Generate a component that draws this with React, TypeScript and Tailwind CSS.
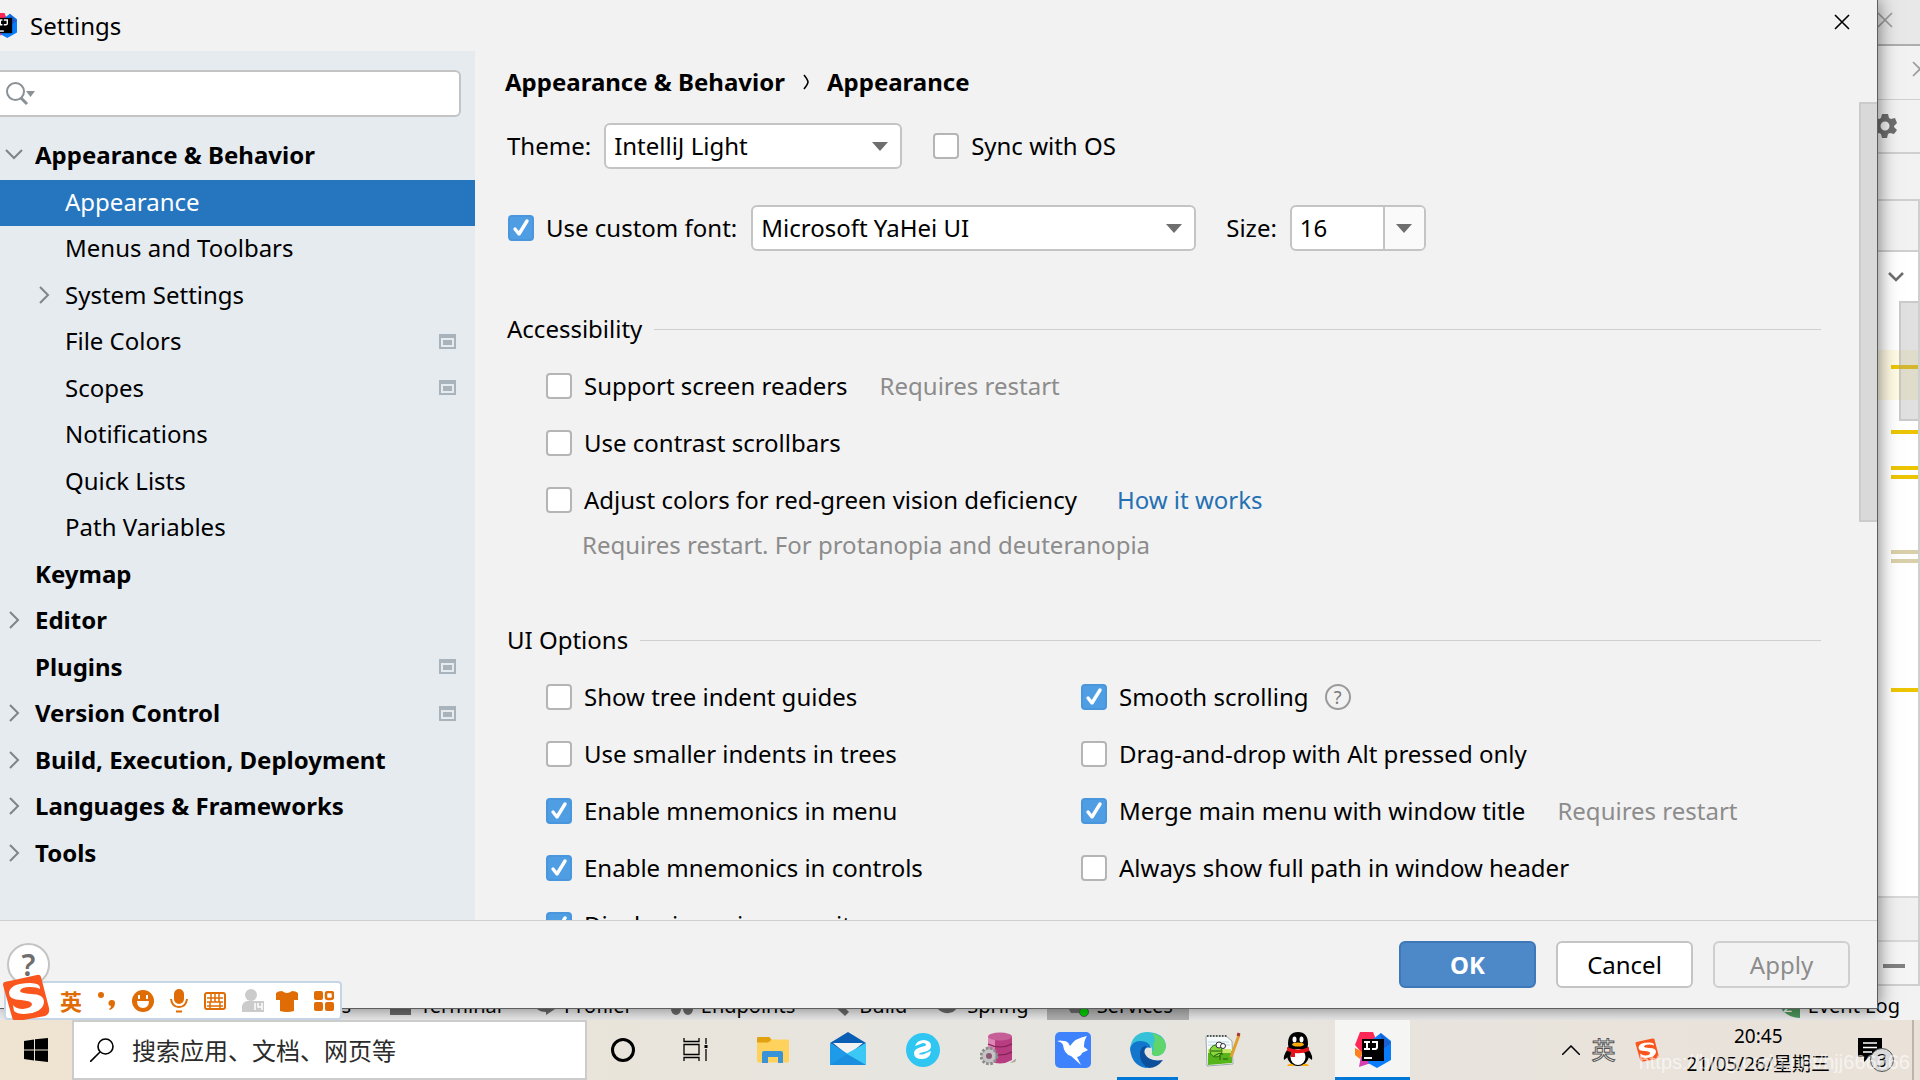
import React from 'react';

type TreeItem = {
  label: string;
  level: 0 | 1;
  arrow?: 'down' | 'right';
  project?: boolean;
  selected?: boolean;
};

const treeItems: TreeItem[] = [
  { label: 'Appearance & Behavior', level: 0, arrow: 'down' },
  { label: 'Appearance', level: 1, selected: true },
  { label: 'Menus and Toolbars', level: 1 },
  { label: 'System Settings', level: 1, arrow: 'right' },
  { label: 'File Colors', level: 1, project: true },
  { label: 'Scopes', level: 1, project: true },
  { label: 'Notifications', level: 1 },
  { label: 'Quick Lists', level: 1 },
  { label: 'Path Variables', level: 1 },
  { label: 'Keymap', level: 0 },
  { label: 'Editor', level: 0, arrow: 'right' },
  { label: 'Plugins', level: 0, project: true },
  { label: 'Version Control', level: 0, arrow: 'right', project: true },
  { label: 'Build, Execution, Deployment', level: 0, arrow: 'right' },
  { label: 'Languages & Frameworks', level: 0, arrow: 'right' },
  { label: 'Tools', level: 0, arrow: 'right' },
];

const IdeaLogo: React.FC<{ className?: string }> = ({ className }) => (
  <svg viewBox="0 0 36 36" className={className} aria-hidden="true">
    <path d="M5 0h13l4 10L8 22 0 13z" fill="#fe2857" />
    <path d="M0 16l8 4-3 7-5-4z" fill="#fc801d" />
    <path d="M6 24l8 4 2 3-12 4z" fill="#d73fb0" />
    <path d="M18 7l8-6 10 8v19l-14 8-9-5z" fill="#087cfa" />
    <path d="M25 1l11 10-8 6z" fill="#1b5fd0" />
    <rect x="7" y="7" width="22" height="22" fill="#000" />
    <path d="M9 10h6M12 10v7M9 17h6M17 10h5v5q0 2-2 2h-3" fill="none" stroke="#fff" strokeWidth="2" />
    <path d="M9 26h8" stroke="#fff" strokeWidth="2" />
  </svg>
);

const SogouLogo: React.FC<{ className?: string }> = ({ className }) => (
  <svg viewBox="0 0 48 48" className={className} aria-hidden="true">
    <path d="M3 8L35 1q3-1 4 2l8 31q1 6-4 8l-27 5q-5 1-6-4L1 11q0-3 2-3z" fill="#f9551c" />
    <path
      d="M38 15Q39 9 28 9 8 9 7 19q0 7 12 7 11 1 11 4 0 4-9 5-7 0-10-4l1 6q3 3 10 3 19-1 20-12 0-8-13-8-11-1-11-3 1-4 10-4 7 0 10 2z"
      fill="#fff"
    />
  </svg>
);

const TreeArrow: React.FC<{ dir: 'down' | 'right' }> = ({ dir }) => (
  <svg viewBox="0 0 18 18" className="size-[18px]" fill="none" stroke="#7f8488" strokeWidth="2" aria-hidden="true">
    <path d={dir === 'down' ? 'M1 4l8 8 8-8' : 'M5 1l8 8-8 8'} />
  </svg>
);

const ProjectIcon: React.FC = () => (
  <svg viewBox="0 0 17 15" className="h-[15px] w-[17px]" aria-hidden="true">
    <path d="M1 1h15v13H1z" fill="none" stroke="#a9b3bb" strokeWidth="2" />
    <path d="M0 0h17v4H0z" fill="#a9b3bb" />
    <path d="M4 6h9v5H4z" fill="#a9b3bb" />
  </svg>
);

const DropArrow: React.FC = () => (
  <svg viewBox="0 0 16 9" className="h-[9px] w-4" aria-hidden="true">
    <path d="M0 0h16L8 9z" fill="#6e6e6e" />
  </svg>
);

const CloseIcon: React.FC<{ className?: string }> = ({ className }) => (
  <svg viewBox="0 0 16 16" className={className} fill="none" stroke="currentColor" aria-hidden="true">
    <path d="M1 1l14 14M15 1L1 15" strokeWidth="1.6" />
  </svg>
);

const Check: React.FC<{ label: string; checked?: boolean; children?: React.ReactNode }> = ({
  label,
  checked,
  children,
}) => (
  <div className="flex items-center whitespace-nowrap">
    <label className="flex items-center gap-3">
      <span className="relative flex">
        <input
          type="checkbox"
          defaultChecked={checked}
          className="peer size-[26px] appearance-none rounded border-2 border-[#b5b5b5] bg-white checked:border-[#4a96dc] checked:bg-[#4f9ee3]"
        />
        <svg
          viewBox="0 0 26 26"
          className="pointer-events-none absolute inset-0 hidden size-[26px] peer-checked:block"
          fill="none"
          stroke="#fff"
          strokeWidth="3.4"
          strokeLinecap="round"
          strokeLinejoin="round"
          aria-hidden="true"
        >
          <path d="M7 14l4 5 8-13" />
        </svg>
      </span>
      {label}
    </label>
    {children}
  </div>
);

const Hint: React.FC<{ children: React.ReactNode }> = ({ children }) => (
  <span className="ml-8 text-[#8c8c8c]">{children}</span>
);

const Combo: React.FC<{ id: string; value: string; className: string }> = ({ id, value, className }) => (
  <div className={`relative h-[46px] ${className}`}>
    <select
      id={id}
      className="h-full w-full appearance-none rounded-md border-2 border-[#c4c4c4] bg-white pl-2 text-black"
    >
      <option>{value}</option>
    </select>
    <span className="pointer-events-none absolute inset-y-0 right-3.5 flex items-center">
      <DropArrow />
    </span>
  </div>
);

const SectionTitle: React.FC<{ title: string; className: string }> = ({ title, className }) => (
  <div className={`flex h-9 items-center gap-3 ${className}`}>
    <h2>{title}</h2>
    <span className="h-px flex-1 bg-[#cfcfcf]" />
  </div>
);

const Sidebar: React.FC = () => (
  <aside className="flex w-[475px] shrink-0 flex-col bg-[#e6ebf0] pt-[19px]">
    <div className="relative mr-3.5 h-[47px]">
      <input
        type="text"
        aria-label="Search settings"
        className="h-full w-full rounded-r-md border-2 border-l-0 border-[#c4c4c4] bg-white pl-10 outline-none"
      />
      <svg viewBox="0 0 32 26" className="pointer-events-none absolute top-2.5 left-1.5 h-[26px] w-8" aria-hidden="true">
        <circle cx="9.500" cy="11.500" r="8.500" fill="none" stroke="#8a9196" strokeWidth="2" />
        <path d="M15 18l6 6" stroke="#8a9196" strokeWidth="3" />
        <path d="M20 11h9l-4.500 6z" fill="#8a9196" />
      </svg>
    </div>
    <ul className="mt-4 flex h-[744px] flex-col">
      {treeItems.map((item) => (
        <li key={item.label} className="flex-1">
          <button
            type="button"
            className={`flex h-full w-full items-center pr-[19px] pb-0.5 text-left whitespace-nowrap ${
              item.level === 0 ? 'pl-[5px] font-bold' : 'pl-[35px]'
            } ${item.selected ? 'bg-[#2675bf] text-white' : ''}`}
          >
            <span className="flex w-[30px] shrink-0">{item.arrow && <TreeArrow dir={item.arrow} />}</span>
            <span className="flex-1">{item.label}</span>
            {item.project && <ProjectIcon />}
          </button>
        </li>
      ))}
    </ul>
  </aside>
);

const AppearancePage: React.FC = () => (
  <main className="flex min-w-0 flex-1 flex-col">
    <h1 className="flex h-[51px] shrink-0 items-center pt-2.5 pl-[30px] font-bold">
      Appearance &amp; Behavior
      <svg viewBox="0 0 6 16" className="mx-[18px] h-4 w-1.5" fill="none" stroke="#000" strokeWidth="1.6" aria-hidden="true">
        <path d="M1 1q4 5 4 7t-4 7" />
      </svg>
      Appearance
    </h1>
    <div className="flex min-h-0 flex-1 overflow-hidden">
      <div className="min-w-0 flex-1 pt-[21px] pr-[38px] pl-8">
        <div className="flex h-[46px] items-center">
          <label htmlFor="theme">Theme:</label>
          <Combo id="theme" value="IntelliJ Light" className="mr-[31px] ml-[13px] w-[298px]" />
          <Check label="Sync with OS" />
        </div>
        <div className="mt-9 flex h-[46px] items-center pl-px">
          <Check label="Use custom font:" checked />
          <Combo id="font" value="Microsoft YaHei UI" className="mr-[30px] ml-3.5 w-[445px]" />
          <label htmlFor="size">Size:</label>
          <div className="ml-[13px] flex h-[46px] w-[136px] overflow-hidden rounded-md border-2 border-[#c4c4c4] bg-white">
            <input id="size" type="text" defaultValue="16" className="w-[91px] pl-2 outline-none" />
            <button
              type="button"
              aria-label="Choose size"
              className="flex flex-1 items-center justify-center border-l-2 border-[#c4c4c4] bg-[#fafafa]"
            >
              <DropArrow />
            </button>
          </div>
        </div>

        <SectionTitle title="Accessibility" className="mt-[60px]" />
        <div className="mt-2.5 grid auto-rows-[57px] items-center pl-[39px]">
          <Check label="Support screen readers">
            <Hint>Requires restart</Hint>
          </Check>
          <Check label="Use contrast scrollbars" />
          <Check label="Adjust colors for red-green vision deficiency">
            <a href="#how" className="ml-10 text-[#2470b3]">
              How it works
            </a>
          </Check>
        </div>
        <p className="h-[34px] pl-[75px] leading-[34px] text-[#8c8c8c]">
          Requires restart. For protanopia and deuteranopia
        </p>

        <SectionTitle title="UI Options" className="mt-[60px]" />
        <div className="mt-2.5 grid auto-rows-[57px] grid-cols-[535px_1fr] items-center pl-[39px]">
          <Check label="Show tree indent guides" />
          <Check label="Smooth scrolling" checked>
            <button
              type="button"
              aria-label="About smooth scrolling"
              className="ml-4 flex size-[26px] items-center justify-center rounded-full border-2 border-[#9a9a9a] text-lg leading-none text-[#7a7a7a]"
            >
              ?
            </button>
          </Check>
          <Check label="Use smaller indents in trees" />
          <Check label="Drag-and-drop with Alt pressed only" />
          <Check label="Enable mnemonics in menu" checked />
          <Check label="Merge main menu with window title" checked>
            <Hint>Requires restart</Hint>
          </Check>
          <Check label="Enable mnemonics in controls" checked />
          <Check label="Always show full path in window header" />
          <Check label="Display icons in menu items" checked />
        </div>
      </div>
      <div className="h-[420px] w-[18px] shrink-0 border-2 border-r-0 border-[#cbcbcb] bg-[#d9d9d9]" />
    </div>
  </main>
);

const SettingsDialog: React.FC = () => (
  <div
    role="dialog"
    aria-label="Settings"
    className="absolute top-0 right-[42px] bottom-[11px] left-0 flex flex-col border-r border-b border-[#5e5e5e] bg-[#f2f2f2] text-2xl shadow-[0_0_18px_rgba(0,0,0,0.55)]"
  >
    <div className="flex h-[51px] shrink-0 items-center overflow-hidden pr-[27px]">
      <IdeaLogo className="-ml-2 size-[25px]" />
      <span className="ml-[13px] flex-1">Settings</span>
      <button type="button" aria-label="Close" className="pb-2">
        <CloseIcon className="size-4" />
      </button>
    </div>
    <div className="flex min-h-0 flex-1">
      <Sidebar />
      <AppearancePage />
    </div>
    <div className="flex h-[88px] shrink-0 items-center gap-5 border-t border-[#cfcfcf] pr-[27px] pl-[7px]">
      <button
        type="button"
        aria-label="Help"
        className="size-[43px] rounded-full border-2 border-[#c4c4c4] bg-white text-3xl leading-none font-semibold text-[#6e6e6e]"
      >
        ?
      </button>
      <span className="flex-1" />
      <button type="button" className="h-[47px] w-[137px] rounded-md border-2 border-[#3f78b8] bg-[#4d89c9] font-bold text-white">
        OK
      </button>
      <button type="button" className="h-[47px] w-[137px] rounded-md border-2 border-[#c4c4c4] bg-white">
        Cancel
      </button>
      <button type="button" disabled className="h-[47px] w-[137px] rounded-md border-2 border-[#cfcfcf] text-[#8c8c8c]">
        Apply
      </button>
    </div>
  </div>
);

// warning stripes in the editor's error gutter
const stripes = [
  { top: 113, color: '#ecc500' },
  { top: 178, color: '#ecc500' },
  { top: 214, color: '#ecc500' },
  { top: 223, color: '#ecc500' },
  { top: 298, color: '#d9cfa8' },
  { top: 307, color: '#d9cfa8' },
  { top: 436, color: '#ecc500' },
];

const toolTabs = [
  { label: 'Problems', gap: 'ml-[262px]', d: '' },
  { label: 'Terminal', gap: 'ml-[39px]', d: 'M0 0h21v20H0zM3 3v3h10V3z' },
  { label: 'Profiler', gap: 'ml-8', d: 'M0 8l4 0q2 6 8 6v-4l9 4-9 6v-3Q2 17 0 8z' },
  { label: 'Endpoints', gap: 'ml-[38px]', d: 'M5 8a5 6 0 100 12 5 6 0 000-12zM17 8a5 6 0 100 12 5 6 0 000-12z' },
  { label: 'Build', gap: 'ml-[34px]', d: 'M2 8l5-4 13 13-4 4z' },
  { label: 'Spring', gap: 'ml-[30px]', d: 'M0 13q14 3 20-9 3 12-8 14-7 1-12-5z' },
];

const IdeBackground: React.FC = () => (
  <div className="flex h-full flex-col bg-[#f2f2f2]">
    <div className="flex h-[46px] shrink-0 items-center justify-end border-b-2 border-[#adadad] bg-[#e8e8e8] pr-[27px] pb-1 text-[#9a9a9a]">
      <CloseIcon className="size-4" />
    </div>
    <div className="flex h-[54px] shrink-0 items-center justify-end overflow-hidden border-b border-[#cfcfcf] pb-2 text-[#9a9a9a]">
      <CloseIcon className="-mr-2 size-4 shrink-0" />
    </div>
    <div className="flex h-[54px] shrink-0 items-center justify-end border-b-2 border-[#cfcfcf] pr-[23px]">
      <svg viewBox="0 0 24 24" className="size-6" aria-hidden="true">
        <path
          fill="#6e6e6e"
          fillRule="evenodd"
          d="M9 0h6l1 4 2 1 4-1 2 5-3 3 0 1 3 3-3 4-4-1-2 1-1 4H9l-1-4-2-1-4 1-2-4 3-3v-2L0 8l2-4 4 1 2-1zM12 7.500a4.500 4.500 0 100 9 4.500 4.500 0 000-9z"
        />
      </svg>
    </div>
    <div className="h-[47px] shrink-0 border-b-2 border-[#cfcfcf]" />
    <div className="flex min-h-0 flex-1 flex-col border-r-2 border-[#cfcfcf]">
      <div className="h-[51px] shrink-0 border-b-2 border-[#cfcfcf]" />
      <div className="relative min-h-0 flex-1 bg-white">
        <div className="absolute top-[98px] right-0 left-0 h-[50px] bg-[#fffae3]" />
        <svg
          viewBox="0 0 16 10"
          className="absolute top-5 right-3.5 h-2.5 w-4"
          fill="none"
          stroke="#6e6e6e"
          strokeWidth="2.500"
          aria-hidden="true"
        >
          <path d="M1 1l7 7 7-7" />
        </svg>
        {stripes.map((s) => (
          <span key={s.top} className="absolute right-0 h-1 w-[27px]" style={{ top: s.top, background: s.color }} />
        ))}
        <div className="absolute top-[49px] right-0 h-[120px] w-[19px] border-2 border-r-0 border-[#aaaaaa]/40 bg-[#999999]/30" />
      </div>
      <div className="h-[46px] shrink-0 border-y-2 border-[#d8d8d8] bg-[#f0f0f0]" />
      <div className="flex h-[44px] shrink-0 items-center justify-end border-b-2 border-[#cfcfcf] bg-[#f5f5f5] pt-1.5 pr-[13px]">
        <span className="h-1 w-[22px] bg-[#808080]" />
      </div>
    </div>
    <div className="flex h-[34px] shrink-0 items-center overflow-hidden pr-5 text-xl whitespace-nowrap">
      {toolTabs.map((tab) => (
        <span key={tab.label} className={`flex items-center gap-2 pt-1.5 ${tab.gap}`}>
          {tab.d && (
            <svg viewBox="0 0 22 22" className="size-[22px]" fill="#6e6e6e" aria-hidden="true">
              <path fillRule="evenodd" d={tab.d} />
            </svg>
          )}
          {tab.label}
        </span>
      ))}
      <span className="ml-[18px] flex h-full items-center gap-2 bg-[#b8b8b8] pt-1.5 pr-4 pl-[18px]">
        <svg viewBox="0 0 24 24" className="size-6" aria-hidden="true">
          <path d="M6 1h12l5 9-5 9H6L1 10z" fill="#6e6e6e" />
          <circle cx="19" cy="18" r="4.500" fill="#00d900" stroke="#5a5a5a" />
        </svg>
        Services
      </span>
      <span className="flex-1" />
      <span className="flex items-center gap-2 pt-1.5">
        <span className="size-6 rounded-b-md rounded-bl-full bg-[#4f9c5e] text-center text-base text-white">2</span>
        Event Log
      </span>
    </div>
  </div>
);

const ImeBar: React.FC = () => (
  <div className="absolute bottom-0 left-1 flex h-[39px] w-[338px] items-center gap-4 rounded border-2 border-[#c6d6e6] bg-white pl-[54px] text-[#df6c04]">
    <SogouLogo className="absolute -bottom-1 -left-1 size-12" />
    <span className="text-[22px] leading-none font-bold">英</span>
    <svg viewBox="0 0 18 20" className="h-5 w-[18px]" fill="currentColor" aria-hidden="true">
      <circle cx="3" cy="4" r="3" />
      <path d="M14 9a3 3 0 013 3q0 5-5 7l-1-1q2-1 2-3a3 3 0 011-6z" />
    </svg>
    <svg viewBox="0 0 22 22" className="size-[22px]" aria-hidden="true">
      <circle cx="11" cy="11" r="11" fill="currentColor" />
      <path d="M5 11h12q0 7-6 7t-6-7zM6 5h2v4H6zM14 5h2v4h-2z" fill="#fff" />
    </svg>
    <svg viewBox="0 0 18 24" className="h-6 w-[18px]" fill="none" stroke="currentColor" strokeWidth="2" aria-hidden="true">
      <rect x="5" y="1" width="8" height="13" rx="4" fill="currentColor" />
      <path d="M1 10q1 8 8 8t8-8M6 22.500h6" />
    </svg>
    <svg viewBox="0 0 22 18" className="h-[18px] w-[22px]" fill="none" stroke="currentColor" strokeWidth="2" aria-hidden="true">
      <rect x="1" y="1" width="20" height="16" rx="2" />
      <path d="M3 6h16M3 10h16M3 14h16" strokeWidth="1.500" />
      <path d="M7 2v8M11 2v8M15 2v8M6 10v6M16 10v6" strokeWidth="1.500" />
    </svg>
    <span className="flex items-center gap-3">
      <svg viewBox="0 0 22 24" className="h-6 w-[22px]" aria-hidden="true">
        <circle cx="9" cy="6" r="6" fill="#cbcbcb" />
        <path d="M0 23v-6q1-4 5-5h8l-1 0h10v11z" fill="#cbcbcb" />
        <path d="M13 14v7M16 14v4h4M20 14v7" stroke="#fff" strokeWidth="1.500" fill="none" />
      </svg>
      <svg viewBox="0 0 22 22" className="size-[22px]" fill="currentColor" aria-hidden="true">
        <path d="M6 1q5 4 10 0 4 0 6 2v7h-4v11q-7 2-14 0V10H0V3q2-2 6-2z" />
      </svg>
    </span>
    <svg viewBox="0 0 20 20" className="size-5" aria-hidden="true">
      <rect width="9" height="9" rx="2" fill="currentColor" />
      <rect y="11" width="9" height="9" rx="2" fill="currentColor" />
      <rect x="11" y="11" width="9" height="9" rx="2" fill="currentColor" />
      <rect x="12" y="1" width="7" height="7" rx="2" fill="none" stroke="currentColor" strokeWidth="2.500" />
    </svg>
  </div>
);

const apps: { name: string; running?: boolean; active?: boolean; icon: React.ReactNode }[] = [
  {
    name: 'Cortana',
    icon: <circle cx="18" cy="18" r="10.500" fill="none" stroke="#000" strokeWidth="3" />,
  },
  {
    name: 'Task View',
    icon: (
      <g fill="none" stroke="#000" strokeWidth="1.300">
        <path d="M4 6v3.500h15V6M4 29v-3.500h15V29M4 12.500h15v10H4zM26 6v6M26 17v12" />
        <path d="M24.500 13h3v3h-3z" fill="#000" stroke="none" />
      </g>
    ),
  },
  {
    name: 'File Explorer',
    icon: (
      <g>
        <path d="M2 8q0-3 2-3h10l3 3v4H2z" fill="#e0a010" />
        <rect x="2" y="7.500" width="32" height="23" rx="1.500" fill="#ffd25e" />
        <path d="M2 9V5.500h13l1 3-3 2H2z" fill="#e2a20f" />
        <path d="M7 31V21q0-2 2-2h17q2 0 2 2v10h-5v-6H13v6z" fill="#3a92d8" />
      </g>
    ),
  },
  {
    name: 'Mail',
    icon: (
      <g>
        <path d="M0 11L18 0l18 11-18 12z" fill="#0a5fb4" />
        <path d="M3 11h30L18 23z" fill="#f2f2f2" />
        <path d="M0 11l36 22H0z" fill="#1e9be8" />
        <path d="M36 11L16 22l20 11z" fill="#3cc8f4" />
        <path d="M0 33l17-11 19 11z" fill="#1a8fe0" />
      </g>
    ),
  },
  {
    name: '2345',
    icon: (
      <g>
        <circle cx="18" cy="18" r="17" fill="#2fc6f2" />
        <path
          d="M10 14q2-6 9-6 8 1 7 7-1 4-7 5-5 1-5 2 1 1 5 0l7-3q-1 8-9 8-8 0-8-6 0-4 7-6 5-1 5-2 0-2-3-2z"
          fill="#fff"
        />
      </g>
    ),
  },
  {
    name: 'Database',
    icon: (
      <g>
        <path d="M30 31l7-5-2 4z" fill="#a8a29c" />
        <path d="M8 4v24q12 7 24 0V4z" fill="#b83d80" />
        <path d="M8 4v24q3 2 7 3V4z" fill="#dd86b4" />
        <ellipse cx="20" cy="4.500" rx="12" ry="4" fill="#c65f97" />
        <path d="M8 12q12 6 24 0M8 20q12 6 24 0" fill="none" stroke="#7d1f52" strokeWidth="1.200" />
        <circle cx="9" cy="24" r="7.500" fill="#bdbdbd" stroke="#8c8c8c" strokeWidth="3.500" strokeDasharray="2.500 1.500" />
        <circle cx="9" cy="24" r="6.500" fill="#c4c4c4" />
        <circle cx="9" cy="24" r="3" fill="#8b5a72" />
      </g>
    ),
  },
  {
    name: 'Xunlei',
    icon: (
      <g>
        <rect width="36" height="36" rx="5" fill="#3e82fe" />
        <path d="M2 9q3-1 7 0 4 0 6 5Q20 6 32 4q-3 4-3 11l4 3-6 3q-1 3-5 4l4 8-10-9Q9 22 8 13q-1-3-6-4z" fill="#fff" />
      </g>
    ),
  },
  {
    name: 'Edge',
    running: true,
    icon: (
      <g>
        <path d="M0 17Q2 0 18 0q17 1 18 14-1 9-9 10-6 0-5-4 1-6-5-8Q8 10 0 17z" fill="#35c1d8" />
        <path d="M22 1q13 3 14 13-1 9-9 10-6 0-5-4 3-3 1-8 4-4-1-11z" fill="#5fd56a" />
        <path d="M0 17q2-8 10-8 9 0 11 7-6-2-7 4-1 9 7 14-2 2-5 2Q2 34 0 17z" fill="#1277cc" />
        <path d="M10 20q2-7 7-6-4 3-2 8 4 8 18 6-6 8-14 8-10-4-9-16z" fill="#0e4f9c" />
      </g>
    ),
  },
  {
    name: 'Notepad++',
    icon: (
      <g>
        <path d="M1 4h20l6 5 1 23-26 2z" fill="#f7fafa" stroke="#9aa" />
        <path d="M3 10h21M3 13h22" stroke="#b8d8e8" />
        <path d="M3 20q10-4 24-1v12L3 33z" fill="#57b51b" />
        <path d="M3 17h23v4H3z" fill="#c9e86a" />
        <path d="M2 4h20" stroke="#555" strokeWidth="2" strokeDasharray="1.500 1.500" />
        <circle cx="11" cy="19" r="6" fill="#86d83a" stroke="#2e6b13" />
        <circle cx="14" cy="13" r="3" fill="#fff" stroke="#333" />
        <circle cx="18" cy="14" r="2.500" fill="#fff" stroke="#333" />
        <path d="M6 19h10M9 24q5-4 9-2M15 23v5M18 27h5" stroke="#26540f" fill="none" />
        <path d="M26 25l8-22" stroke="#e0a030" strokeWidth="3" />
        <path d="M33 4l1-3" stroke="#a33" strokeWidth="3" />
      </g>
    ),
  },
  {
    name: 'QQ',
    icon: (
      <g>
        <path d="M8 12Q8 0 18 0t10 12q-1 4 1 6 4 6 3 10l-4-3H8l-4 3q-1-4 3-10 2-2 1-6z" fill="#000" />
        <ellipse cx="18" cy="23" rx="11" ry="11" fill="#000" />
        <ellipse cx="18" cy="25" rx="7.500" ry="8" fill="#fff" />
        <ellipse cx="14.500" cy="7.500" rx="2" ry="3" fill="#fff" />
        <ellipse cx="21.500" cy="7.500" rx="2" ry="3" fill="#fff" />
        <ellipse cx="18" cy="12.500" rx="6" ry="2" fill="#faab07" />
        <path d="M7 15q11 5 22 0v4q-7 3-14 2v4h-4v-5l-4-1z" fill="#e8141a" />
        <path d="M7 34q2-4 7-1v1zM29 34q-2-4-7-1v1z" fill="#faab07" />
      </g>
    ),
  },
  { name: 'IntelliJ IDEA', running: true, active: true, icon: <IdeaLogo /> },
];

const Taskbar: React.FC = () => (
  <div className="flex h-[60px] shrink-0 bg-linear-to-r from-[#efe3d1] via-[#e6e5e0] to-[#eae2d9]">
    <button type="button" aria-label="Start" className="flex w-[72px] items-center justify-center">
      <svg viewBox="0 0 24 24" className="size-6" fill="#000" aria-hidden="true">
        <path d="M0 3l10-1.500v10H0zM11 1.300L24 0v11.500H11zM0 12.500h10v10L0 21zM11 12.500h13V24l-13-1.500z" />
      </svg>
    </button>
    <label className="flex w-[515px] items-center border-2 border-[#cccccc] bg-white pl-4">
      <svg viewBox="0 0 24 24" className="size-6" fill="none" stroke="#000" strokeWidth="1.600" aria-hidden="true">
        <circle cx="15.500" cy="8.500" r="7.500" />
        <path d="M10 14L0 24" />
      </svg>
      <input
        type="text"
        aria-label="搜索"
        placeholder="搜索应用、文档、网页等"
        className="ml-[18px] min-w-0 flex-1 pt-0.5 text-2xl outline-none placeholder:text-[#2b2b2b]"
      />
    </label>
    <div className="-ml-0.5 flex">
      {apps.map((app) => (
        <button
          key={app.name}
          type="button"
          aria-label={app.name}
          className={`flex w-[75px] flex-col items-center justify-end ${app.active ? 'bg-[#f5f5f4]' : ''}`}
        >
          <svg viewBox="0 0 36 36" className="mb-[9px] size-9" aria-hidden="true">
            {app.icon}
          </svg>
          <span className={`h-[3px] ${app.active ? 'w-full' : 'w-[61px]'} ${app.running ? 'bg-[#0078d7]' : ''}`} />
        </button>
      ))}
    </div>
    <div className="relative flex flex-1 items-center justify-end">
      <svg viewBox="0 0 18 10" className="mr-3 h-2.5 w-[18px]" fill="none" stroke="#000" strokeWidth="1.500" aria-hidden="true">
        <path d="M0 10l9-9 9 9" />
      </svg>
      <span className="mr-[19px] text-2xl leading-none text-white [-webkit-text-stroke:1px_#555]">英</span>
      <SogouLogo className="mr-7 size-6" />
      <div className="mr-7 text-center text-[19px] leading-7">
        <p>20:45</p>
        <p>21/05/26/星期三</p>
      </div>
      <div className="relative mr-[30px]">
        <svg viewBox="0 0 24 24" className="size-6" aria-hidden="true">
          <path d="M0 0h24v19H11l-5 5v-5H0z" fill="#000" />
          <path d="M5 5h14M5 9.500h14M5 14h9" stroke="#fff" strokeWidth="1.300" />
        </svg>
        <span className="absolute top-2.5 left-3 flex size-6 items-center justify-center rounded-full border border-[#555] bg-[#dadada] text-lg leading-none">
          3
        </span>
      </div>
      <span className="h-full w-0.5 bg-[#bcb5ac]" />
      <span className="w-1.5" />
      <span className="absolute right-2.5 bottom-1.5 font-['Liberation_Sans'] text-xl leading-6 text-white/60">
        https://blog.csdn.net/hjj666666
      </span>
    </div>
  </div>
);

const App: React.FC = () => {
  return (
    <div className="flex h-screen flex-col overflow-hidden bg-[#f2f2f2] font-['Noto_Sans','Noto_Sans_CJK_SC',sans-serif] text-black">
      <div className="relative min-h-0 flex-1 overflow-hidden">
        <IdeBackground />
        <SettingsDialog />
        <ImeBar />
      </div>
      <Taskbar />
    </div>
  );
};

export default App;
